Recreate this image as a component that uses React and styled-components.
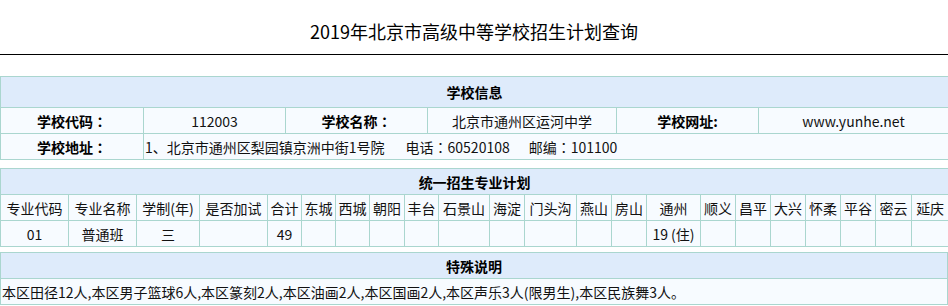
import React from "react";
import styled, { createGlobalStyle } from "styled-components";

const Global = createGlobalStyle`
  html, body { margin: 0; padding: 0; background: #fff; }
  body {
    font-family: "Noto Sans CJK SC", "Microsoft YaHei", sans-serif;
    font-size: 14px;
    color: #111;
  }
`;

const BORDER = "#aad6cf";
const HEAD_BG = "#deebfb";
const ROW_BG = "#f7fbff";

const Page = styled.div`
  width: 948px;
  display: flex;
  flex-direction: column;
`;

const Title = styled.h1`
  margin: 0;
  padding-top: 20px;
  height: 34px;
  line-height: 22px;
  font-size: 18px;
  font-weight: normal;
  color: #000;
  text-align: center;
  border-bottom: 1px solid #000;
`;

const Table = styled.table`
  width: 948px;
  border-collapse: collapse;
  table-layout: fixed;
  margin-top: ${(p) => p.$mt}px;
`;

const HeadCell = styled.th`
  background: ${HEAD_BG};
  border: 1px solid ${BORDER};
  height: ${(p) => p.$h || 25}px;
  padding: 0;
  font-weight: bold;
  font-size: 14px;
  color: #000;
  text-align: center;
`;

const Cell = styled.td`
  background: ${ROW_BG};
  border: 1px solid ${BORDER};
  height: 25px;
  padding: 0 ${(p) => (p.$left ? "1px" : "0")};
  line-height: 20px;
  font-size: 14px;
  font-weight: ${(p) => (p.$bold ? "bold" : "normal")};
  color: ${(p) => (p.$bold ? "#000" : "#111")};
  text-align: ${(p) => (p.$left ? "left" : "center")};
  white-space: nowrap;
  overflow: hidden;
`;

const Colon = styled.span`
  font-family: "Noto Sans CJK TC", "Noto Sans CJK SC", sans-serif;
`;

const Gap = styled.span`
  display: inline-block;
  width: ${(p) => p.$w}px;
`;

const infoCols = [143, 142, 142, 189, 142, 190];

const planCols = [
  ["专业代码", 68],
  ["专业名称", 68],
  ["学制(年)", 63],
  ["是否加试", 68],
  ["合计", 34],
  ["东城", 34],
  ["西城", 34],
  ["朝阳", 35],
  ["丰台", 34],
  ["石景山", 51],
  ["海淀", 35],
  ["门头沟", 52],
  ["燕山", 35],
  ["房山", 35],
  ["通州", 54],
  ["顺义", 35],
  ["昌平", 35],
  ["大兴", 35],
  ["怀柔", 35],
  ["平谷", 35],
  ["密云", 36],
  ["延庆", 37],
];

const planRow = {
  专业代码: "01",
  专业名称: "普通班",
  "学制(年)": "三",
  合计: "49",
  通州: "19 (住)",
};

export default function App() {
  return (
    <Page>
      <Global />
      <Title>2019年北京市高级中等学校招生计划查询</Title>

      <Table $mt={21}>
        <colgroup>
          {infoCols.map((w, i) => (
            <col key={i} style={{ width: w }} />
          ))}
        </colgroup>
        <thead>
          <tr>
            <HeadCell colSpan={6} $h={30}>学校信息</HeadCell>
          </tr>
        </thead>
        <tbody>
          <tr>
            <Cell $bold>学校代码<Colon>：</Colon></Cell>
            <Cell>112003</Cell>
            <Cell $bold>学校名称<Colon>：</Colon></Cell>
            <Cell>北京市通州区运河中学</Cell>
            <Cell $bold>学校网址:</Cell>
            <Cell>www.yunhe.net</Cell>
          </tr>
          <tr>
            <Cell $bold>学校地址<Colon>：</Colon></Cell>
            <Cell colSpan={5} $left>
              1、北京市通州区梨园镇京洲中街1号院<Gap $w={21} />电话<Colon>：</Colon>60520108<Gap $w={19} />邮编<Colon>：</Colon>101100
            </Cell>
          </tr>
        </tbody>
      </Table>

      <Table $mt={8}>
        <colgroup>
          {planCols.map(([, w], i) => (
            <col key={i} style={{ width: w }} />
          ))}
        </colgroup>
        <thead>
          <tr>
            <HeadCell colSpan={planCols.length}>统一招生专业计划</HeadCell>
          </tr>
        </thead>
        <tbody>
          <tr>
            {planCols.map(([name]) => (
              <Cell key={name}>{name}</Cell>
            ))}
          </tr>
          <tr>
            {planCols.map(([name]) => (
              <Cell key={name}>{planRow[name] || ""}</Cell>
            ))}
          </tr>
        </tbody>
      </Table>

      <Table $mt={5}>
        <thead>
          <tr>
            <HeadCell>特殊说明</HeadCell>
          </tr>
        </thead>
        <tbody>
          <tr>
            <Cell $left>
              本区田径12人,本区男子篮球6人,本区篆刻2人,本区油画2人,本区国画2人,本区声乐3人(限男生),本区民族舞3人。
            </Cell>
          </tr>
        </tbody>
      </Table>
    </Page>
  );
}
